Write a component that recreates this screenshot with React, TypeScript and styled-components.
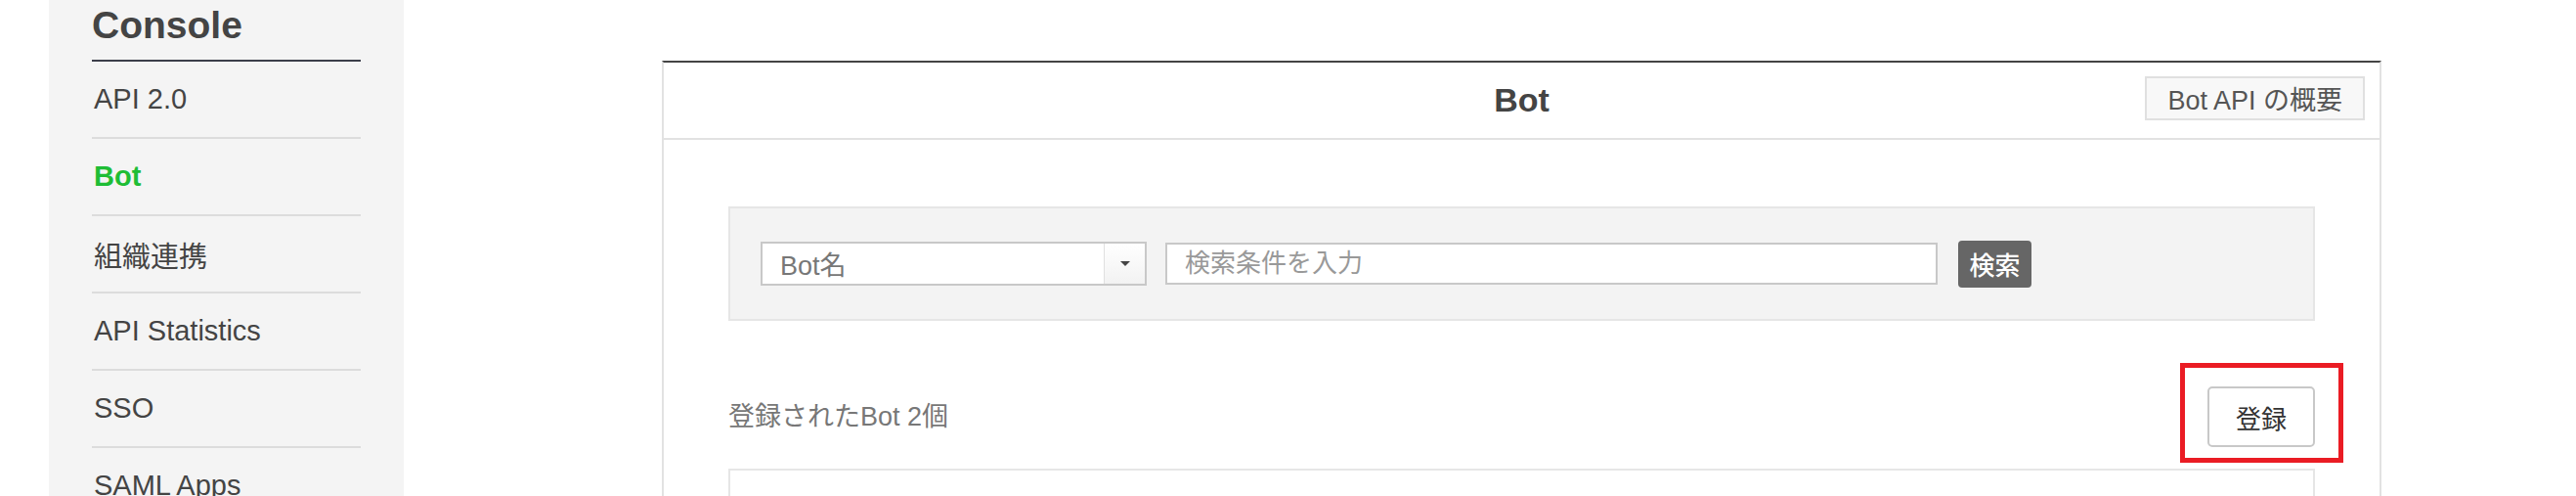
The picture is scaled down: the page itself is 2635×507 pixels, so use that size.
import React from 'react';
import styled, { createGlobalStyle } from 'styled-components';

const menuItems = ['API 2.0', 'Bot', '組織連携', 'API Statistics', 'SSO', 'SAML Apps', 'Audit'];

const GlobalStyle = createGlobalStyle`
  html, body {
    margin: 0;
    padding: 0;
    background: #fff;
    height: 507px;
    overflow: hidden;
  }
  body {
    font-family: "Liberation Sans", "Noto Sans CJK JP", sans-serif;
    color: #444;
  }
  * {
    box-sizing: border-box;
  }
`;

const App = () => {
  return (
    <>
      <GlobalStyle />
      <Page>
        <Sidebar>
          <Brand>Console</Brand>
          <Menu>
            {menuItems.map((item) => (
              <MenuItem key={item} $active={item === 'Bot'}>
                {item}
              </MenuItem>
            ))}
          </Menu>
        </Sidebar>

        <Panel>
          <PanelHeader>
            <Title>Bot</Title>
            <OverviewButton>Bot API の概要</OverviewButton>
          </PanelHeader>

          <PanelBody>
            <SearchBox>
              <Select>
                <SelectValue>Bot名</SelectValue>
                <SelectArrow>
                  <Caret />
                </SelectArrow>
              </Select>
              <SearchInput placeholder="検索条件を入力" />
              <SearchButton>検索</SearchButton>
            </SearchBox>

            <ListHeader>
              <Count>登録されたBot 2個</Count>
              <RegisterButton>
                登録
                <Highlight />
              </RegisterButton>
            </ListHeader>

            <ListBox />
          </PanelBody>
        </Panel>
      </Page>
    </>
  );
};

const Page = styled.div`
  display: flex;
  align-items: stretch;
  height: 507px;
  padding-left: 50px;
`;

const Sidebar = styled.aside`
  width: 363px;
  flex-shrink: 0;
  background: #f4f4f4;
  padding: 6px 44px 0 44px;
`;

const Brand = styled.h1`
  margin: 0;
  font-size: 39px;
  line-height: 39px;
  font-weight: bold;
  color: #444;
  padding-bottom: 16px;
  border-bottom: 2px solid #3b3e4a;
`;

const Menu = styled.nav`
  display: flex;
  flex-direction: column;
`;

const MenuItem = styled.div<{ $active?: boolean }>`
  height: 79px;
  flex-shrink: 0;
  display: flex;
  align-items: center;
  padding-left: 2px;
  border-bottom: 2px solid #dcdcdc;
  font-size: 29px;
  font-weight: ${(props) => (props.$active ? 'bold' : 'normal')};
  color: ${(props) => (props.$active ? '#1ebd35' : '#444')};
`;

const Panel = styled.section`
  margin-left: 264px;
  margin-top: 62px;
  width: 1759px;
  flex-shrink: 0;
  align-self: flex-start;
  border-top: 2px solid #444;
  border-left: 2px solid #e2e2e2;
  border-right: 2px solid #e2e2e2;
`;

const PanelHeader = styled.header`
  display: grid;
  grid-template-columns: 1fr auto 1fr;
  align-items: center;
  height: 79px;
  border-bottom: 2px solid #e2e2e2;
`;

const Title = styled.h2`
  grid-column: 2;
  margin: 0;
  font-size: 34px;
  font-weight: bold;
  color: #444;
`;

const OverviewButton = styled.button`
  grid-column: 3;
  justify-self: end;
  margin: -4px 15px 0 0;
  height: 45px;
  padding: 0 21px;
  font-family: inherit;
  font-size: 27px;
  color: #555;
  background: #f8f8f8;
  border: 2px solid #e0e0e0;
`;

const PanelBody = styled.div`
  padding: 68px 66px 0 66px;
`;

const SearchBox = styled.div`
  display: flex;
  align-items: center;
  height: 117px;
  padding: 0 31px;
  background: #f3f3f3;
  border: 2px solid #e6e6e6;
`;

const Select = styled.div`
  display: flex;
  width: 395px;
  height: 45px;
  background: #fff;
  border: 2px solid #c8c8c8;
`;

const SelectValue = styled.div`
  flex: 1;
  display: flex;
  align-items: center;
  padding-left: 18px;
  font-size: 27px;
  color: #777;
`;

const SelectArrow = styled.div`
  width: 42px;
  display: flex;
  align-items: center;
  justify-content: center;
  border-left: 1px solid #e0e0e0;
  background: linear-gradient(#fff, #f2f2f2);
`;

const Caret = styled.span`
  width: 0;
  height: 0;
  border-left: 5px solid transparent;
  border-right: 5px solid transparent;
  border-top: 5px solid #444;
`;

const SearchInput = styled.input`
  margin-left: 19px;
  width: 790px;
  height: 43px;
  padding: 0 0 0 18px;
  font-family: inherit;
  font-size: 26px;
  color: #444;
  background: #fff;
  border: 2px solid #c8c8c8;
  outline: none;
  &::placeholder {
    color: #999;
  }
`;

const SearchButton = styled.button`
  margin-left: 21px;
  width: 75px;
  height: 48px;
  padding: 0;
  font-family: inherit;
  font-size: 26px;
  font-weight: 500;
  color: #fff;
  background: #666;
  border: none;
  border-radius: 4px;
`;

const ListHeader = styled.div`
  display: flex;
  justify-content: space-between;
  align-items: center;
  margin-top: 67px;
`;

const Count = styled.div`
  font-size: 27px;
  color: #777;
  margin-top: -6px;
`;

const RegisterButton = styled.button`
  position: relative;
  width: 110px;
  height: 62px;
  padding: 0;
  font-family: inherit;
  font-size: 26px;
  color: #333;
  background: #fff;
  border: 2px solid #c8c8c8;
  border-radius: 5px;
`;

const Highlight = styled.span`
  position: absolute;
  top: -26px;
  left: -30px;
  width: 167px;
  height: 102px;
  border: 5px solid #ea1c24;
  pointer-events: none;
`;

const ListBox = styled.div`
  margin-top: 22px;
  height: 300px;
  border: 2px solid #e6e6e6;
`;

export default App;
